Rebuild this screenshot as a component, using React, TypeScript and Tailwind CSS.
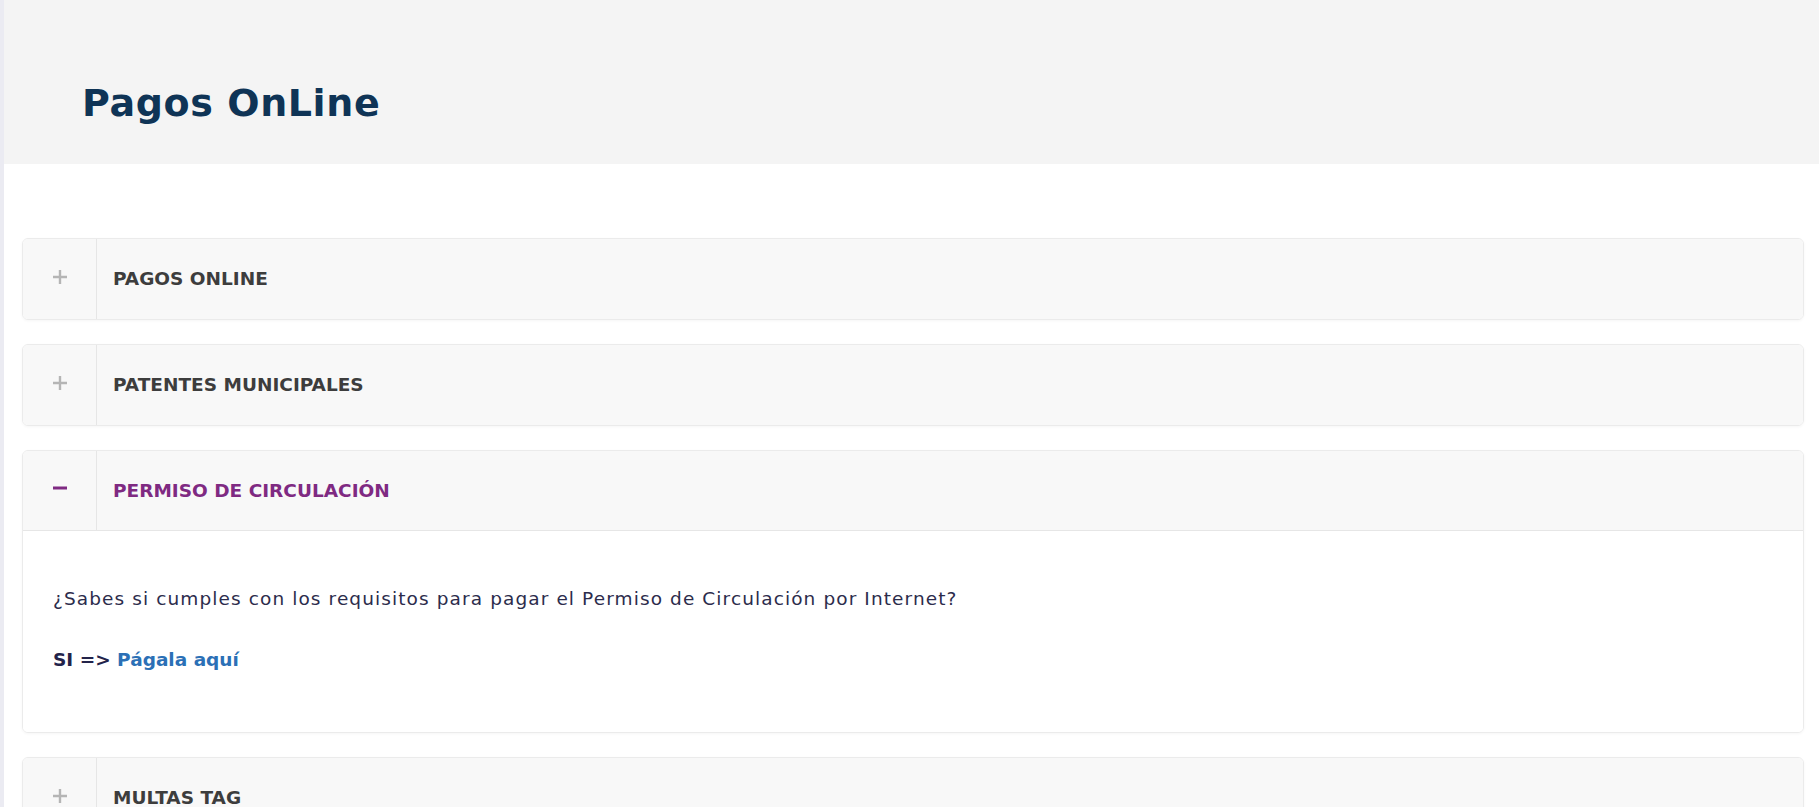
import React, { useState } from 'react';

interface Seccion {
  id: number;
  titulo: string;
}

const secciones: Seccion[] = [
  { id: 1, titulo: 'PAGOS ONLINE' },
  { id: 2, titulo: 'PATENTES MUNICIPALES' },
  { id: 3, titulo: 'PERMISO DE CIRCULACIÓN' },
  { id: 4, titulo: 'MULTAS TAG' },
];

function PlusIcon() {
  return (
    <svg className="w-[16px] h-[16px] text-[#b5b5b5]" viewBox="0 0 16 16" fill="none" stroke="currentColor" strokeWidth={2.4}>
      <path d="M8 1v14M1 8h14" />
    </svg>
  );
}

function MinusIcon() {
  return (
    <svg className="w-[16px] h-[16px] text-[#7f2a82]" viewBox="0 0 16 16" fill="none" stroke="currentColor" strokeWidth={3}>
      <path d="M1 8h14" />
    </svg>
  );
}

export default function App() {
  const [abierto, setAbierto] = useState<number>(3);

  return (
    <div className="min-h-[807px] bg-white flex font-['DejaVu_Sans',sans-serif]">
      <div className="w-[4px] shrink-0 bg-[#ebebf2]" />
      <div className="flex-1 min-w-0">
        <div className="bg-[#f4f4f4] h-[164px] pl-[78px] pt-[79px]">
          <h1 className="text-[38px] leading-[48px] font-bold text-[#0f3456] tracking-[0.6px]">Pagos OnLine</h1>
        </div>

        <div className="pt-[74px] pl-[18px] pr-[15px] flex flex-col gap-[24px]">
          {secciones.map((s) => {
            const open = abierto === s.id;
            return (
              <div
                key={s.id}
                className="rounded-[6px] border border-[#ebebeb] shadow-[0_1px_3px_rgba(0,0,0,0.04)] overflow-hidden"
              >
                <button
                  onClick={() => setAbierto(open ? 0 : s.id)}
                  className={`w-full flex items-stretch h-[80px] bg-[#f8f8f8] text-left ${open ? 'border-b border-[#e6e6e6]' : ''}`}
                >
                  <div className="w-[74px] shrink-0 flex items-center justify-center pb-[5px] border-r border-[#e6e6e6]">
                    {open ? <MinusIcon /> : <PlusIcon />}
                  </div>
                  <div
                    className={`flex items-center pl-[16px] text-[18.5px] font-bold ${open ? 'text-[#7f2a82]' : 'text-[#3d3d3d]'}`}
                  >
                    {s.titulo}
                  </div>
                </button>
                {open && (
                  <div className="bg-white pl-[30px] pt-[55px] pb-[59px] text-[#2c2c4c]">
                    <p className="text-[18.5px] leading-[26px] tracking-[1.1px]">
                      ¿Sabes si cumples con los requisitos para pagar el Permiso de Circulación por Internet?
                    </p>
                    <p className="mt-[35px] text-[18.5px] leading-[26px] font-bold">
                      <span className="text-[#23234a]">SI =&gt; </span>
                      <a href="#" className="text-[#2b70b6]">Págala aquí</a>
                    </p>
                  </div>
                )}
              </div>
            );
          })}
        </div>
      </div>
    </div>
  );
}
